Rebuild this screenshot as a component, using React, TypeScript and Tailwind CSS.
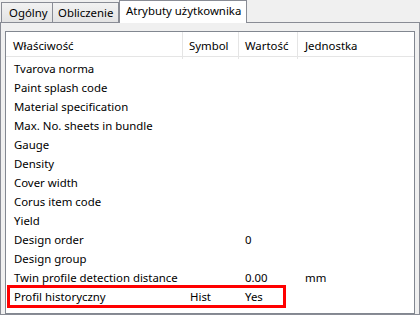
import React from 'react';

interface Row {
  name: string;
  symbol?: string;
  value?: string;
  unit?: string;
  marked?: boolean;
}

const rows: Row[] = [
  { name: 'Tvarova norma' },
  { name: 'Paint splash code' },
  { name: 'Material specification' },
  { name: 'Max. No. sheets in bundle' },
  { name: 'Gauge' },
  { name: 'Density' },
  { name: 'Cover width' },
  { name: 'Corus item code' },
  { name: 'Yield' },
  { name: 'Design order', value: '0' },
  { name: 'Design group' },
  { name: 'Twin profile detection distance', value: '0.00', unit: 'mm' },
  { name: 'Profil historyczny', symbol: 'Hist', value: 'Yes', marked: true },
];

const cols = 'grid grid-cols-[177px_56px_59px_1fr]';

const App: React.FC = () => {
  return (
    <div className="w-[420px] h-[315px] overflow-hidden bg-[#f0f0f0] text-[11.4px] text-black font-['Segoe_UI','Noto_Sans',sans-serif] whitespace-nowrap">
      {/* tabs */}
      <div className="flex items-end h-[22px] pl-[1px]">
        <div className="w-[52px] h-[20px] border border-b-0 border-[#898c95] bg-gradient-to-b from-[#f2f2f2] to-[#e3e3e3] pl-[7px] leading-[20px]">
          Ogólny
        </div>
        <div className="w-[66px] h-[20px] border border-b-0 border-l-0 border-[#898c95] bg-gradient-to-b from-[#f2f2f2] to-[#e3e3e3] pl-[5px] leading-[20px]">
          Obliczenie
        </div>
        <div className="relative z-10 -mb-px w-[128px] h-[23px] border border-b-0 border-[#898c95] bg-white pl-[6px] leading-[19px]">
          Atrybuty użytkownika
        </div>
      </div>

      {/* panel */}
      <div className="h-[293px] border border-[#898c95] pt-[8px] pl-[4px] pr-[4px]">
        <div className="h-full border border-[#828790] bg-white">
          <div className={`${cols} h-[25px] border-b border-[#e5e5e5] leading-[27px]`}>
            <div className="pl-[7px] border-r border-[#e5e5e5]">Właściwość</div>
            <div className="pl-[6px] border-r border-[#e5e5e5]">Symbol</div>
            <div className="pl-[6px] border-r border-[#e5e5e5]">Wartość</div>
            <div className="pl-[7px]">Jednostka</div>
          </div>
          <div className="pt-[2px]">
            {rows.map((r) => (
              <div key={r.name} className={`${cols} relative h-[19px] leading-[19px]`}>
                <div className="pl-[8px]">{r.name}</div>
                <div className="pl-[7px]">{r.symbol}</div>
                <div className="pl-[6px]">{r.value}</div>
                <div className="pl-[7px]">{r.unit}</div>
                {r.marked && (
                  <div className="absolute left-[1px] top-[-2px] w-[279px] h-[23px] border-[3px] border-[#ff0000]" />
                )}
              </div>
            ))}
          </div>
        </div>
      </div>
    </div>
  );
};

export default App;
